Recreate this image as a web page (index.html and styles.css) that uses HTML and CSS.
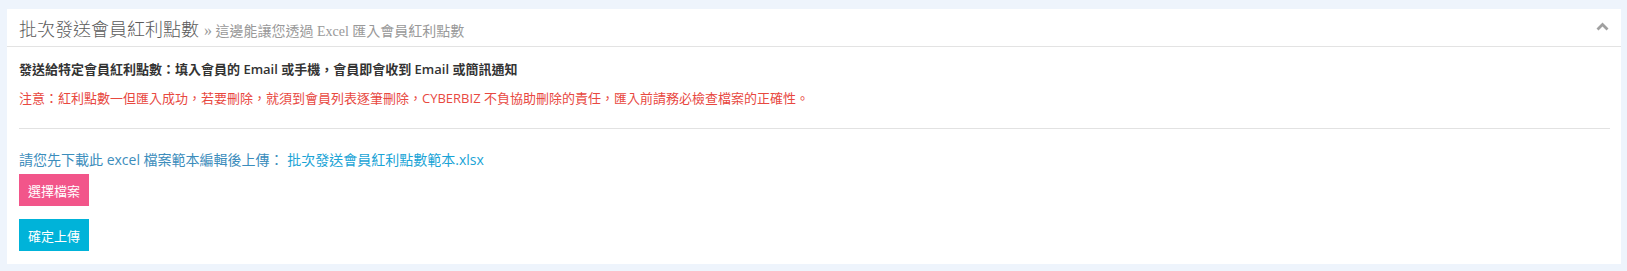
FILE: index.html
```html
<!DOCTYPE html>
<html lang="zh-Hant">
<head>
<meta charset="utf-8">
<link rel="stylesheet" href="styles.css">
</head>
<body>
<div class="panel">
  <div class="panel-header">
    <div class="title">
      <span class="title-main">批次發送會員紅利點數</span>
      <span class="title-sub"><span class="raquo">»</span> 這邊能讓您透過 Excel 匯入會員紅利點數</span>
    </div>
    <svg class="chevron" width="13" height="9" viewBox="0 0 13 9"><path d="M1.5 7.5 L6.5 2.5 L11.5 7.5" fill="none" stroke="#a0a0a0" stroke-width="2.8"/></svg>
  </div>
  <div class="panel-body">
    <p class="desc">發送給特定會員紅利點數：填入會員的 Email 或手機，會員即會收到 Email 或簡訊通知</p>
    <p class="warn">注意：紅利點數一但匯入成功，若要刪除，就須到會員列表逐筆刪除，CYBERBIZ 不負協助刪除的責任，匯入前請務必檢查檔案的正確性。</p>
    <hr class="divider">
    <p class="hint">請您先下載此 excel 檔案範本編輯後上傳： <a class="link" href="#">批次發送會員紅利點數範本.xlsx</a></p>
    <button class="btn btn-pink">選擇檔案</button>
    <button class="btn btn-blue">確定上傳</button>
  </div>
</div>
</body>
</html>
```
FILE: styles.css
```css
html, body {
  margin: 0;
  padding: 0;
}
body {
  background: #eef4fc;
  padding: 9px 6px 7px 7px;
  font-family: "Open Sans", "Noto Sans CJK TC", sans-serif;
}
.panel {
  background: #fff;
  height: 255px;
  display: flex;
  flex-direction: column;
}
.panel-header {
  height: 37px;
  border-bottom: 1px solid #e3e3e3;
  display: flex;
  align-items: center;
  justify-content: space-between;
  padding: 0 12px 0 12px;
}
.title {
  display: flex;
  align-items: baseline;
  white-space: nowrap;
}
.title-main {
  font-family: "Noto Sans CJK TC", sans-serif;
  font-size: 18px;
  color: #5a5a5a;
  font-weight: 300;
}
.title-sub {
  font-family: "Liberation Serif", "Noto Sans CJK TC", serif;
  font-size: 14px;
  color: #999;
  margin-left: 5px;
}
.raquo {
  font-size: 16px;
}
.chevron {
  margin-top: -2px;
}
.panel-body {
  padding: 12px 11px 0 12px;
  display: flex;
  flex-direction: column;
  align-items: flex-start;
}
.desc {
  margin: 0;
  font-size: 13px;
  line-height: 20px;
  font-weight: 600;
  color: #333;
  white-space: nowrap;
}
.warn {
  margin: 9px 0 0;
  font-size: 13px;
  line-height: 20px;
  color: #e8483f;
  white-space: nowrap;
}
.divider {
  align-self: stretch;
  border: 0;
  border-top: 1px solid #e2e2e2;
  margin: 20px 0 0;
  height: 0;
}
.hint {
  margin: 21px 0 0;
  font-size: 14px;
  line-height: 20px;
  color: #3c8dbc;
  white-space: nowrap;
}
.link {
  color: #1aa4d6;
  text-decoration: none;
}
.btn {
  border: 0;
  height: 32px;
  width: 70px;
  padding: 0;
  color: #fff;
  font-family: "Open Sans", "Noto Sans CJK TC", sans-serif;
  font-size: 13px;
  cursor: pointer;
}
.btn-pink {
  background: #f2558a;
  margin-top: 4px;
}
.btn-blue {
  background: #00b3d9;
  margin-top: 13px;
}
```
